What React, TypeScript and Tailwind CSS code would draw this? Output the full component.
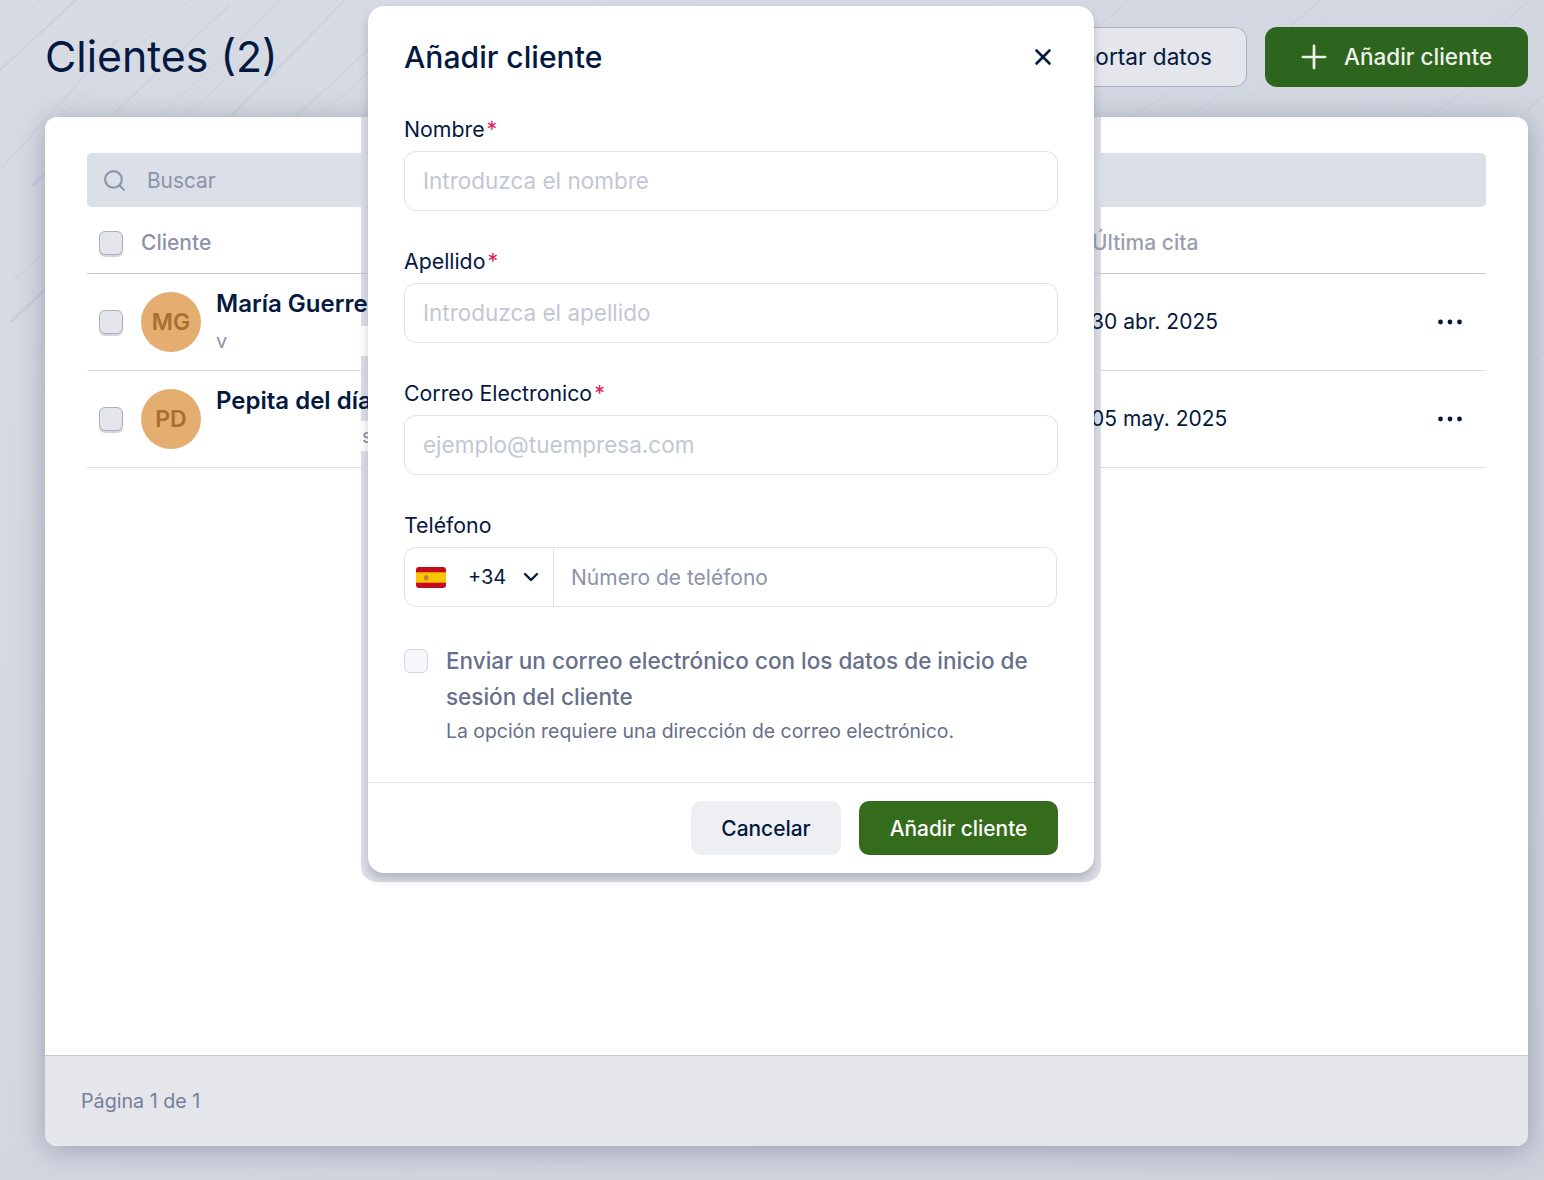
import React from 'react';
import { ChevronDown, Plus, Search, X } from 'lucide-react';

const font = { fontFamily: 'Inter, "Liberation Sans", sans-serif' };

// streaks in the page background: x1, y1, x2, y2, width, opacity
const streaks: number[][] = [
  [0, 36, 40, 0, 1, 0.35],
  [0, 70, 76, 0, 2, 0.5],
  [0, 170, 117, 40, 1.5, 0.4],
  [33, 185, 60, 160, 3, 0.8],
  [14, 280, 60, 238, 1, 0.7],
  [12, 321, 60, 275, 2.5, 0.7],
  [32, 355, 60, 330, 1, 0.5],
  [60, 117, 190, 0, 1, 0.5],
  [110, 117, 230, 5, 1.5, 0.45],
  [160, 117, 280, 0, 1, 0.6],
  [185, 117, 300, 10, 1, 0.5],
  [230, 117, 345, 0, 2, 0.45],
  [295, 117, 368, 50, 1.5, 0.5],
  [320, 117, 368, 72, 1, 0.6],
  [1094, 30, 1130, 0, 1, 0.5],
  [1247, 100, 1340, 0, 1, 0.4],
  [1094, 100, 1160, 27, 1, 0.5],
  [1130, 117, 1180, 87, 1, 0.5],
  [1190, 117, 1230, 87, 1, 0.5],
  [1430, 117, 1470, 87, 1.5, 0.4],
  [1290, 27, 1320, 0, 2, 0.4],
  [1500, 27, 1530, 0, 1.5, 0.4],
  [1528, 110, 1544, 95, 2, 0.5],
  [1528, 370, 1544, 350, 1, 0.5],
];

const Checkbox: React.FC = () => (
  <span className="block w-6 h-6 shrink-0 rounded-[6px] border border-[#a9b0c2] bg-[#e4e6eb] shadow-[0_2px_0_#d3d6de]" />
);

const Avatar: React.FC<{ initials: string }> = ({ initials }) => (
  <span className="flex items-center justify-center w-[60px] h-[60px] shrink-0 rounded-full bg-[#e3ae70] text-[#a96f2e] text-[23px] font-semibold">
    {initials}
  </span>
);

const ClientRow: React.FC<{
  initials: string;
  name: string;
  sub: string;
  subIndent: string;
  subTop: string;
  date: string;
}> = ({ initials, name, sub, subIndent, subTop, date }) => (
  <div className="relative flex items-center h-[97px] border-b border-[#dcdfe7]">
    <div className="ml-3 mr-[18px]">
      <Checkbox />
    </div>
    <Avatar initials={initials} />
    <div className="relative ml-[15px] w-[875px] h-full">
      <p className="pt-[13px] text-[24px] leading-[34px] font-semibold text-[#04193f] whitespace-nowrap">{name}</p>
      <p className={`absolute left-0 w-[152px] h-[30px] bg-white text-[20px] leading-[30px] text-[#8b93a8] overflow-hidden ${subTop} ${subIndent}`}>
        {sub}
      </p>
    </div>
    <span className="text-[21px] text-[#04193f] whitespace-nowrap">{date}</span>
    <svg className="absolute right-[23px] top-[44px]" width="26" height="8" viewBox="0 0 26 8" fill="#04193f">
      <circle cx="3.5" cy="4" r="2.4" />
      <circle cx="13" cy="4" r="2.4" />
      <circle cx="22.5" cy="4" r="2.4" />
    </svg>
  </div>
);

const Field: React.FC<{ label: string; placeholder: string; required?: boolean }> = ({ label, placeholder, required }) => (
  <div className="mb-[38px]">
    <p className="mb-2.5 text-[21.3px] leading-6 text-[#04193f]">
      {label}
      {required && <span className="text-[#e11d5c] ml-0.5">*</span>}
    </p>
    <div className="flex items-center h-[60px] px-[18px] rounded-xl border border-[#dfe1e8] text-[22.5px] text-[#c3c7d3]">
      {placeholder}
    </div>
  </div>
);

const SpainFlag: React.FC = () => (
  <svg width="30" height="21" viewBox="0 0 30 21">
    <rect width="30" height="21" rx="3" fill="#c60b1e" />
    <rect y="5" width="30" height="11" fill="#ffc400" />
    <rect y="5" width="30" height="1" fill="#f08a10" />
    <rect y="15" width="30" height="1" fill="#f08a10" />
    <rect x="8" y="8" width="4.5" height="5.5" rx="2" fill="#c0813a" />
  </svg>
);

const AddClientModal: React.FC = () => (
  <div className="absolute left-[368px] top-1.5 z-20 w-[726px] h-[867px] rounded-2xl bg-white shadow-[0_6px_10px_rgba(60,65,85,0.25)]">
    <div className="px-9 pt-[33px]">
      <div className="flex items-center justify-between mb-[42px]">
        <h2 className="text-[30.1px] leading-9 font-medium text-[#04193f]">Añadir cliente</h2>
        <X className="w-[26px] h-[26px] text-[#04193f] mr-[2px]" strokeWidth={2.4} />
      </div>
      <Field label="Nombre" placeholder="Introduzca el nombre" required />
      <Field label="Apellido" placeholder="Introduzca el apellido" required />
      <Field label="Correo Electronico" placeholder="ejemplo@tuempresa.com" required />
      <p className="mb-2.5 text-[21.3px] leading-6 text-[#04193f]">Teléfono</p>
      <div className="flex items-center w-[653px] h-[60px] rounded-xl border border-[#dfe1e8]">
        <div className="flex items-center w-[149px] h-full pl-[11px] border-r border-[#dfe1e8]">
          <SpainFlag />
          <span className="ml-[22px] text-[20px] text-[#04193f]">+34</span>
          <ChevronDown className="ml-[13px] w-6 h-6 text-[#04193f]" strokeWidth={2.4} />
        </div>
        <span className="pl-[17px] pt-px text-[21px] text-[#8b93a8]">Número de teléfono</span>
      </div>
      <div className="flex mt-[24px]">
        <span className="block w-6 h-6 mt-[18px] shrink-0 rounded-[6px] border border-[#d5d8e1] bg-[#f5f6f9]" />
        <div className="ml-[18px]">
          <p className="mt-[12px] text-[22.5px] leading-9 font-medium text-[#66708a]">
            Enviar un correo electrónico con los datos de inicio de sesión del cliente
          </p>
          <p className="text-[19.4px] leading-[32px] text-[#66708a]">La opción requiere una dirección de correo electrónico.</p>
        </div>
      </div>
    </div>
    <div className="absolute inset-x-0 top-[776px] flex justify-end gap-[18px] h-[91px] px-9 pt-[18px] border-t border-[#e2e3e9]">
      <button className="w-[150px] h-[54px] pt-px rounded-[10px] bg-[#eeeff3] text-[20.9px] font-medium text-[#04193f]">Cancelar</button>
      <button className="w-[199px] h-[54px] pt-px rounded-[10px] bg-[#356c1c] text-[20.9px] font-medium text-white">Añadir cliente</button>
    </div>
  </div>
);

const App: React.FC = () => (
  <div style={font} className="relative w-[1544px] h-[1180px] overflow-hidden bg-gradient-to-br from-[#d7dbe4] to-[#ced2dd] pl-[45px] pr-4 pt-[27px]">
    <svg className="absolute inset-0" width="1544" height="1180">
      {streaks.map(([x1, y1, x2, y2, w, o], i) => (
        <line key={i} x1={x1} y1={y1} x2={x2} y2={y2} stroke="#c3c8d9" strokeWidth={w} strokeOpacity={o} strokeLinecap="round" />
      ))}
    </svg>

    <header className="relative flex items-center justify-between h-[60px] mb-[30px]">
      <h1 className="text-[42.8px] leading-[60px] text-[#04193f]">Clientes (2)</h1>
      <div className="flex gap-[18px]">
        <button className="h-[60px] px-[34px] rounded-xl border border-[#a9b0c2] bg-[#e4e6eb] text-[22.6px] text-[#04193f]">Exportar datos</button>
        <button className="flex items-center gap-[11px] w-[263px] h-[60px] pl-[30px] rounded-xl bg-[#2d641e] text-[22.5px] font-medium text-[#eef2ea]">
          <Plus className="w-[38px] h-[38px]" strokeWidth={1.7} />
          Añadir cliente
        </button>
      </div>
    </header>

    <main className="relative flex flex-col h-[1029px] rounded-xl bg-white shadow-[0_4px_28px_rgba(90,98,125,0.45)]">
      <div className="absolute left-[316px] top-0 w-[740px] h-[765px] rounded-b-2xl bg-[#dddfe5]" />
      <div className="relative flex-1 px-[42px] pt-9">
        <div className="flex items-center h-[54px] rounded-[5px] bg-[#dbdfe8] pl-[15px] text-[20.8px] text-[#8b93a8]">
          <Search className="w-[25px] h-[25px]" strokeWidth={2} />
          <span className="ml-[20px] pt-px">Buscar</span>
        </div>
        <div className="flex items-center h-[67px] pt-[5px] border-b border-[#c8cbd6] text-[21px] font-medium text-[#8b93a8]">
          <div className="ml-3 mr-[18px]">
            <Checkbox />
          </div>
          <span className="w-[951px]">Cliente</span>
          <span className="text-[#9a9eae]">Última cita</span>
        </div>
        <ClientRow initials="MG" name="María Guerrero" sub="v" subIndent="pl-0" subTop="top-[52px]" date="30 abr. 2025" />
        <ClientRow initials="PD" name="Pepita del día" sub="s" subIndent="pl-[146px]" subTop="top-[50px]" date="05 may. 2025" />
      </div>
      <footer className="flex items-center h-[91px] pl-[36px] pt-[2px] rounded-b-xl border-t border-[#c8cbd6] bg-[#e4e6eb] text-[19.7px] text-[#76809a]">
        Página 1 de 1
      </footer>
    </main>

    <AddClientModal />
  </div>
);

export default App;
